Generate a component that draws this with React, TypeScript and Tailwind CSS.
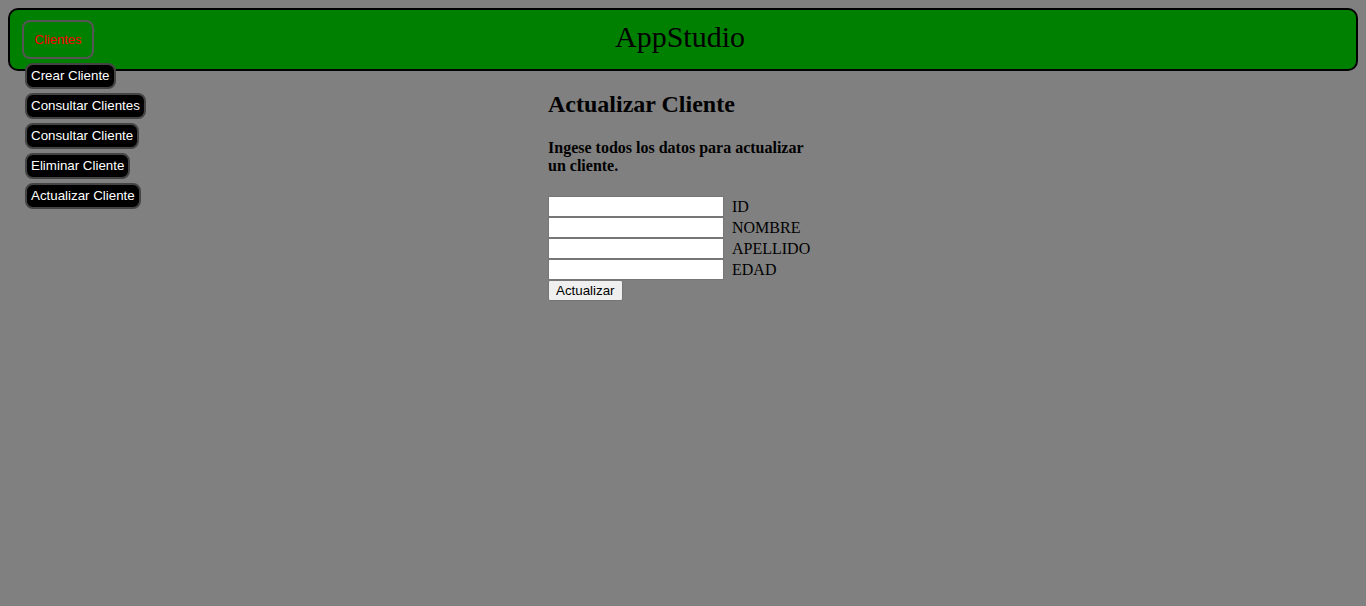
import { useState } from "react";

const menu = [
  "Crear Cliente",
  "Consultar Clientes",
  "Consultar Cliente",
  "Eliminar Cliente",
  "Actualizar Cliente",
];

const fields = ["ID", "NOMBRE", "APELLIDO", "EDAD"];

export default function App() {
  const [values, setValues] = useState<Record<string, string>>({});

  return (
    <div className="min-h-[606px] bg-[#808080] p-2 font-['Liberation_Serif',serif] text-black">
      {/* Header */}
      <header className="relative flex h-[63px] items-start rounded-[10px] border-2 border-black bg-[#008000]">
        <div className="relative ml-3 mt-[10px]">
          <button className="h-[39px] w-[72px] rounded-[8px] border-2 border-[#555] bg-transparent font-['Liberation_Sans',sans-serif] text-[13px] text-[#ff0000]">
            Clientes
          </button>
          {/* Dropdown */}
          <div className="absolute left-[3px] top-[43px] z-10 flex flex-col items-start gap-1">
            {menu.map((m) => (
              <button
                key={m}
                className="h-[26px] whitespace-nowrap rounded-[8px] border-2 border-[#444] bg-black px-[4px] font-['Liberation_Sans',sans-serif] text-[13.33px] text-white"
              >
                {m}
              </button>
            ))}
          </div>
        </div>
        <h1 className="absolute left-[605px] top-[9px] text-[30px] leading-[36px]">AppStudio</h1>
      </header>

      {/* Main */}
      <main className="pl-[540px] pt-5">
        <h2 className="text-[24px] font-bold leading-[27px]">Actualizar Cliente</h2>
        <p className="mt-[21px] w-[262px] text-[16px] font-bold leading-[18px]">
          Ingese todos los datos para actualizar un cliente.
        </p>
        <form className="mt-[21px] flex flex-col" onSubmit={(e) => e.preventDefault()}>
          {fields.map((f) => (
            <div key={f} className="flex h-[21px] items-center">
              <input
                value={values[f] ?? ""}
                onChange={(e) => setValues({ ...values, [f]: e.target.value })}
                className="h-[21px] w-[176px] border border-[#767676] bg-white px-[2px] text-[13px] font-['Liberation_Sans',sans-serif]"
              />
              <span className="ml-2 text-[16px] leading-[21px]">{f}</span>
            </div>
          ))}
          <div className="flex">
            <button className="h-[21px] rounded-[2px] border border-[#767676] bg-[#efefef] px-[7px] font-['Liberation_Sans',sans-serif] text-[13.33px] leading-[18px]">
              Actualizar
            </button>
          </div>
        </form>
      </main>
    </div>
  );
}
